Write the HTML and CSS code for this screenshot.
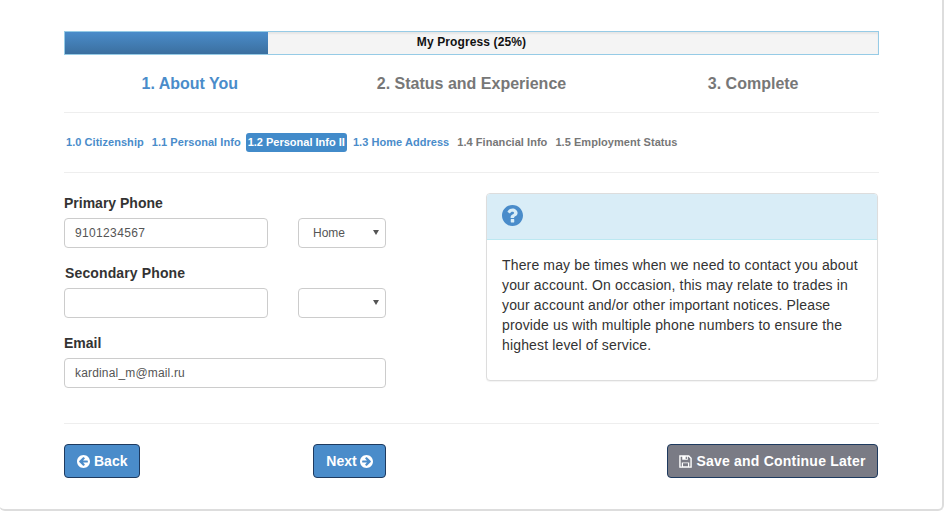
FILE: index.html
```html
<!DOCTYPE html>
<html lang="en">
<head>
<meta charset="utf-8">
<title>My Progress</title>
<link rel="stylesheet" href="styles.css">
</head>
<body>
<main class="card">
  <div class="progress">
    <div class="progress-fill" style="width:25%"></div>
    <div class="progress-label">My Progress (25%)</div>
  </div>
  <nav class="steps">
    <div class="step step-active">1. About You</div>
    <div class="step">2. Status and Experience</div>
    <div class="step">3. Complete</div>
  </nav>
  <nav class="substeps">
    <a class="sub sub-done">1.0 Citizenship</a>
    <a class="sub sub-done">1.1 Personal Info</a>
    <a class="sub sub-current">1.2 Personal Info II</a>
    <a class="sub sub-done">1.3 Home Address</a>
    <a class="sub">1.4 Financial Info</a>
    <a class="sub">1.5 Employment Status</a>
  </nav>
  <section class="content">
    <form class="form">
      <label class="label">Primary Phone</label>
      <div class="row">
        <input class="input input-phone" type="text" value="9101234567">
        <div class="select"><span>Home</span><i class="caret"></i></div>
      </div>
      <label class="label label-secondary">Secondary Phone</label>
      <div class="row">
        <input class="input input-phone" type="text" value="">
        <div class="select"><span></span><i class="caret"></i></div>
      </div>
      <label class="label">Email</label>
      <div class="row">
        <input class="input input-full" type="text" value="kardinal_m@mail.ru">
      </div>
    </form>
    <aside class="panel">
      <div class="panel-head">
        <svg class="help" viewBox="0 0 1536 1536" width="21" height="21"><path fill="#4a8cca" d="M768 0c424 0 768 344 768 768s-344 768-768 768S0 1192 0 768 344 0 768 0zm128 1248v-192c0-18-14-32-32-32H672c-18 0-32 14-32 32v192c0 18 14 32 32 32h192c18 0 32-14 32-32zm244-672c0-183-192-320-364-320-163 0-285 70-371 212-9 14-5 32 8 42l132 100c5 4 12 6 19 6 9 0 19-4 25-12 47-60 67-78 86-92 17-12 50-24 86-24 64 0 123 41 123 85 0 52-27 78-88 106-71 32-168 115-168 212v36c0 18 14 32 32 32h192c18 0 32-14 32-32 0-23 29-72 76-99 76-43 180-101 180-252z"/></svg>
      </div>
      <p class="panel-body">There may be times when we need to contact you about your account. On occasion, this may relate to trades in your account and/or other important notices. Please provide us with multiple phone numbers to ensure the highest level of service.</p>
    </aside>
  </section>
  <footer class="actions">
    <div class="actions-left">
      <button class="btn" type="button"><svg class="ico" viewBox="0 0 1536 1536"><path fill="#fff" d="M768 0c424 0 768 344 768 768s-344 768-768 768S0 1192 0 768 344 0 768 0zm512 832V704c0-35-29-64-64-64H714l189-189c12-12 19-28 19-45s-7-33-19-45l-91-91c-12-12-28-18-45-18s-33 6-45 18L269 723c-12 12-18 28-18 45s6 33 18 45l453 453c12 12 28 18 45 18s33-6 45-18l91-91c12-12 18-28 18-45s-6-33-18-45L714 896h502c35 0 64-29 64-64z"/></svg> Back</button>
      <button class="btn btn-next" type="button">Next <svg class="ico" viewBox="0 0 1536 1536"><path fill="#fff" d="M768 0c424 0 768 344 768 768s-344 768-768 768S0 1192 0 768 344 0 768 0zm499 813c12-12 18-28 18-45s-6-33-18-45L814 270c-12-12-28-18-45-18s-33 6-45 18l-91 91c-12 12-18 28-18 45s6 33 18 45l189 189H320c-35 0-64 29-64 64v128c0 35 29 64 64 64h502L633 1085c-12 12-19 28-19 45s7 33 19 45l91 91c12 12 28 18 45 18s33-6 45-18z"/></svg></button>
    </div>
    <button class="btn btn-grey" type="button"><svg class="ico ico-save" viewBox="0 0 14 14"><path fill="none" stroke="#fff" stroke-width="1.5" d="M1 1h9.500L13 3.500V13H1z"/><path fill="#fff" d="M3.500 1h6v4.200h-6zM3 8h8v5H3z"/><path fill="#7a7b85" d="M7.200 1.800h1.300v2.600H7.200zM4.300 9h5.400v3H4.300z"/></svg> Save and Continue Later</button>
  </footer>
</main>
</body>
</html>
```
FILE: styles.css
```css
* { box-sizing: border-box; }
html, body { margin: 0; padding: 0; background: #fff; }
body {
  height: 513px;
  overflow: hidden;
  font-family: "Liberation Sans", Arial, sans-serif;
  color: #333;
}
.card {
  width: 945px;
  height: 511px;
  margin-left: -1px;
  padding: 31px 63px 0 65px;
  background: #fff;
  border: 1px solid #ddd;
  border-width: 0 2px 2px 0;
  border-radius: 0 0 6px 6px;
}
.progress {
  position: relative;
  height: 24px;
  border: 1px solid #96cbe6;
  background: #f4f4f4;
  box-shadow: inset 0 2px 2px rgba(0,0,0,.06);
}
.progress-fill {
  height: 100%;
  background: linear-gradient(to bottom, #4a8cca, #3b6f9f);
}
.progress-label {
  position: absolute;
  inset: 0;
  text-align: center;
  font-size: 12px;
  font-weight: 700;
  line-height: 21px;
  letter-spacing: .12px;
  color: #111;
}
.steps {
  position: relative;
  display: grid;
  grid-template-columns: repeat(3, 1fr);
  height: 58px;
  margin: 0 -15px;
}
.steps::after {
  content: "";
  position: absolute;
  left: 15px;
  right: 15px;
  bottom: 0;
  border-bottom: 1px solid #eee;
}
.step {
  text-align: center;
  font-size: 16px;
  font-weight: 700;
  line-height: 57px;
  color: #777;
}
.step-active { color: #4a8cca; }
.substeps {
  display: flex;
  align-items: center;
  height: 60px;
  border-bottom: 1px solid #eee;
}
.sub {
  padding: 0 2px;
  margin-right: 4px;
  font-size: 11px;
  font-weight: 700;
  line-height: 19px;
  letter-spacing: .05px;
  color: #777;
  white-space: nowrap;
}
.sub-done { color: #4a8cca; }
.sub-current {
  color: #fff;
  background: #428bca;
  border-radius: 3px;
  margin-left: -1px;
  margin-right: 4px;
  letter-spacing: 0;
}
.content {
  display: flex;
  justify-content: space-between;
  align-items: flex-start;
  height: 251px;
  border-bottom: 1px solid #eee;
}
.form { width: 322px; padding-top: 22px; }
.label {
  display: block;
  font-size: 14px;
  font-weight: 700;
  line-height: 17px;
  margin-bottom: 6px;
  color: #333;
}
.label-secondary { margin-left: 1px; letter-spacing: .13px; }
.row {
  display: flex;
  justify-content: space-between;
  margin-bottom: 17px;
}
.input, .select {
  height: 30px;
  border: 1px solid #ccc;
  border-radius: 4px;
  background: #fff;
  font-family: inherit;
  font-size: 12px;
  color: #555;
}
.input { padding: 0 10px; outline: none; }
.input-phone { width: 204px; letter-spacing: .35px; }
.input-full { width: 322px; letter-spacing: .17px; }
.select {
  position: relative;
  width: 88px;
  padding-left: 14px;
  line-height: 28px;
}
.caret {
  position: absolute;
  right: 6px;
  top: 11px;
  border: 3px solid transparent;
  border-top: 5px solid #555;
  border-bottom: 0;
}
.panel {
  width: 392px;
  height: 188px;
  margin: 20px 1px 0 0;
  border: 1px solid #ddd;
  border-radius: 4px;
  box-shadow: 0 1px 1px rgba(0,0,0,.05);
  background: #fff;
}
.panel-head {
  height: 46px;
  padding: 11px 15px;
  background: #d9edf7;
  border-bottom: 1px solid #bce8f1;
  border-radius: 3px 3px 0 0;
}
.help { display: block; }
.panel-body {
  margin: 0;
  padding: 15px;
  font-size: 14px;
  line-height: 20px;
  letter-spacing: .15px;
  color: #333;
}
.actions {
  display: flex;
  justify-content: space-between;
  padding-top: 20px;
}
.actions-left { display: flex; justify-content: space-between; width: 322px; }
.btn {
  display: inline-flex;
  align-items: center;
  justify-content: center;
  gap: 4px;
  height: 34px;
  padding: 0 12px;
  background: #4a8cca;
  border: 1px solid #1e3a5f;
  border-radius: 4px;
  color: #fff;
  font-family: inherit;
  font-size: 14px;
  font-weight: 700;
}
.btn-next { gap: 3px; width: 73px; padding: 0; }
.btn-grey { background: #7a7b85; width: 211px; margin-right: 1px; padding: 0; letter-spacing: .22px; }
.ico { width: 13px; height: 13px; display: block; }
```
